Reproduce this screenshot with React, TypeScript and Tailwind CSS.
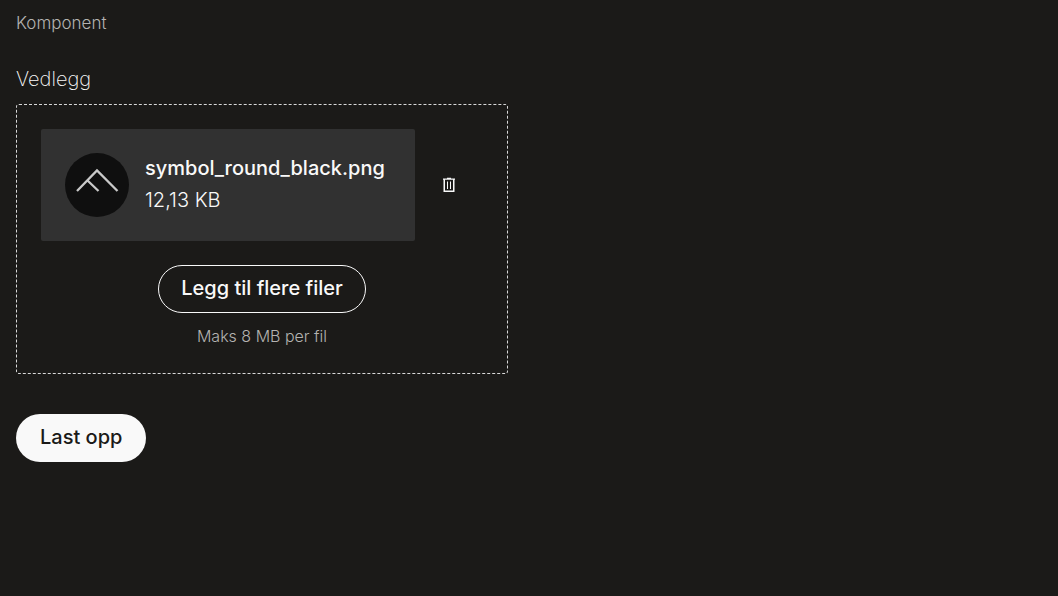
function MountainMark() {
  return (
    <svg viewBox="0 0 64 64" className="size-16 shrink-0" role="img" aria-label="symbol_round_black.png">
      <circle cx="32" cy="32" r="32" fill="#0f0f0f" />
      <path d="M12 38 32 17.5 52.5 38M22.5 27.5 33.5 38" fill="none" stroke="#c9c9c9" strokeWidth="2.3" />
    </svg>
  );
}

function TrashIcon() {
  return (
    <svg viewBox="0 0 12 16" className="h-4 w-3" fill="none" stroke="#f9f9f9" aria-hidden="true">
      <path d="M0 2h12M4 1.25h4" strokeWidth="1.25" />
      <path d="M1.25 2v12.25h9.5V2" strokeWidth="1.5" />
      <path d="M4.5 4.5v7.5M7.5 4.5v7.5" strokeWidth="1" />
    </svg>
  );
}

export default function App() {
  return (
    <main className="min-h-screen bg-[#1b1a18] px-4 pt-3 font-['Inter','Liberation_Sans',sans-serif] font-light text-[#f9f9f9]">
      <p className="pb-0.5 text-[17px] leading-[22px] text-[#b4b3b1]">Komponent</p>
      <form className="pt-7" onSubmit={(event) => event.preventDefault()}>
        <h2 id="attachments" className="pb-0.5 text-[20px] leading-[30px] font-extralight">Vedlegg</h2>
        <section
          aria-labelledby="attachments"
          className="mt-2 flex max-w-[492px] flex-col items-center rounded-[3px] border border-dashed border-[#d8d8d8] p-6"
        >
          <div className="flex w-full items-center">
            <div className="flex min-w-0 flex-1 items-center gap-4 rounded-[2px] bg-[#313131] p-6">
              <MountainMark />
              <div className="min-w-0 text-[20px] leading-[30px]">
                <p className="truncate pb-0.5 font-medium">symbol_round_black.png</p>
                <p className="pb-0.5">12,13 KB</p>
              </div>
            </div>
            <button type="button" aria-label="Fjern fil" className="flex h-12 w-17 shrink-0 items-center justify-center">
              <TrashIcon />
            </button>
          </div>
          <button
            type="button"
            className="mt-6 h-12 rounded-full border border-[#f9f9f9] px-[22px] pb-0.5 text-[20px] leading-8 font-medium"
          >
            Legg til flere filer
          </button>
          <p className="mt-3 pb-0.5 text-[16px] leading-[22px] text-[#b4b3b1]">Maks 8 MB per fil</p>
        </section>
        <button type="submit" className="mt-10 h-12 rounded-full bg-[#f9f9f9] px-6 pb-0.5 text-[20px] leading-8 font-medium text-[#1b1a18]">
          Last opp
        </button>
      </form>
    </main>
  );
}
